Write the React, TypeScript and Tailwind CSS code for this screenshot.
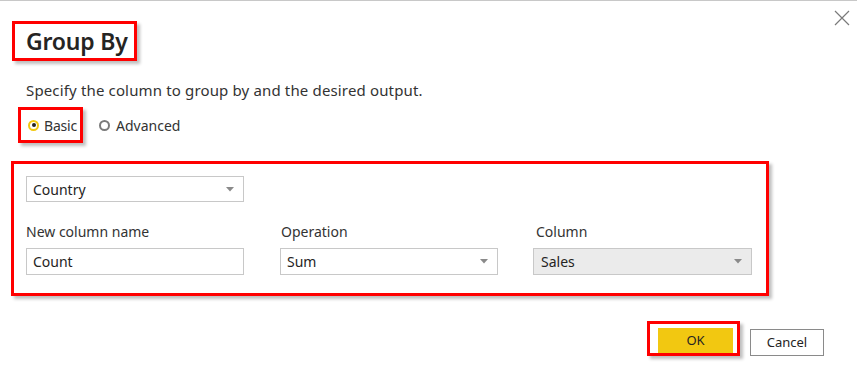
import React from "react";

const font = { fontFamily: '"Noto Sans", "Open Sans", sans-serif' };

function Arrow() {
  return (
    <svg width="8" height="5" viewBox="0 0 8 5" className="shrink-0">
      <path d="M0 0 L8 0 L4 4.5 Z" fill="#8a8a8a" />
    </svg>
  );
}

export default function App() {
  return (
    <div
      className="w-[857px] h-[386px] bg-white border-t border-[#c8c8c8] text-[#252423] overflow-hidden"
      style={font}
    >
      <div className="flex justify-between items-start">
        <div className="ml-[12px] mt-[20px] w-[125px] h-[40px] border-[3px] border-[#ff0000] shadow-[3px_3px_3px_rgba(0,0,0,0.25)] flex items-center pl-[11px]">
          <span className="text-[23px] font-semibold tracking-[-0.2px] leading-none">Group By</span>
        </div>
        <svg width="16" height="16" viewBox="0 0 16 16" className="mt-[9px] mr-[7px]">
          <path d="M1 1 L15 15 M15 1 L1 15" stroke="#7a7a7a" strokeWidth="1.2" />
        </svg>
      </div>

      <div className="ml-[26px] mt-[19px] text-[15px] tracking-[0.15px] leading-[20px] text-[#333]">
        Specify the column to group by and the desired output.
      </div>

      <div className="flex items-center mt-[7px]">
        <div className="ml-[18px] w-[65px] h-[36px] border-[3px] border-[#ff0000] shadow-[3px_3px_3px_rgba(0,0,0,0.25)] flex items-center pl-[7px] gap-[5px]">
          <span className="w-[11px] h-[11px] rounded-full border-[2px] border-[#f2c811] flex items-center justify-center">
            <span className="w-[4px] h-[4px] rounded-full bg-[#252423]" />
          </span>
          <span className="text-[14px] tracking-[-0.2px] text-[#333]">Basic</span>
        </div>
        <div className="ml-[16px] flex items-center gap-[6px]">
          <span className="w-[11px] h-[11px] rounded-full border-[2px] border-[#7a7a7a]" />
          <span className="text-[14px] text-[#333]">Advanced</span>
        </div>
      </div>

      <div className="ml-[11px] mt-[18px] w-[758px] h-[135px] border-[3px] border-[#ff0000] shadow-[3px_3px_3px_rgba(0,0,0,0.25)] pl-[12px] pt-[12px]">
        <div className="w-[218px] h-[26px] border border-[#c8c8c8] flex items-center justify-between pl-[6px] pr-[9px]">
          <span className="text-[14px]">Country</span>
          <Arrow />
        </div>
        <div className="flex mt-[20px]">
          <div className="w-[254px]">
            <div className="text-[14px] text-[#333] leading-[20px]">New column name</div>
            <div className="mt-[6px] w-[218px] h-[27px] border border-[#c8c8c8] flex items-center pl-[6px]">
              <span className="text-[14px]">Count</span>
            </div>
          </div>
          <div className="w-[253px]">
            <div className="text-[14px] text-[#333] leading-[20px] pl-[1px]">Operation</div>
            <div className="mt-[6px] w-[218px] h-[27px] border border-[#c8c8c8] flex items-center justify-between pl-[6px] pr-[9px]">
              <span className="text-[14px]">Sum</span>
              <Arrow />
            </div>
          </div>
          <div>
            <div className="text-[14px] text-[#333] leading-[20px] pl-[3px]">Column</div>
            <div className="mt-[6px] w-[219px] h-[27px] border border-[#c8c8c8] bg-[#ebebeb] flex items-center justify-between pl-[7px] pr-[9px]">
              <span className="text-[14px]">Sales</span>
              <Arrow />
            </div>
          </div>
        </div>
      </div>

      <div className="flex justify-end items-start mt-[25px] mr-[33px]">
        <div className="w-[93px] h-[35px] border-[3px] border-[#ff0000] shadow-[3px_3px_3px_rgba(0,0,0,0.25)] pl-[8px] pt-[4px]">
          <div className="w-[75px] h-[25px] bg-[#f2c811] flex items-center justify-center text-[13px] text-[#252423]">
            OK
          </div>
        </div>
        <div className="ml-[10px] mt-[8px] w-[74px] h-[27px] border border-[#8a8a8a] flex items-center justify-center text-[13px] text-[#252423]">
          Cancel
        </div>
      </div>
    </div>
  );
}
